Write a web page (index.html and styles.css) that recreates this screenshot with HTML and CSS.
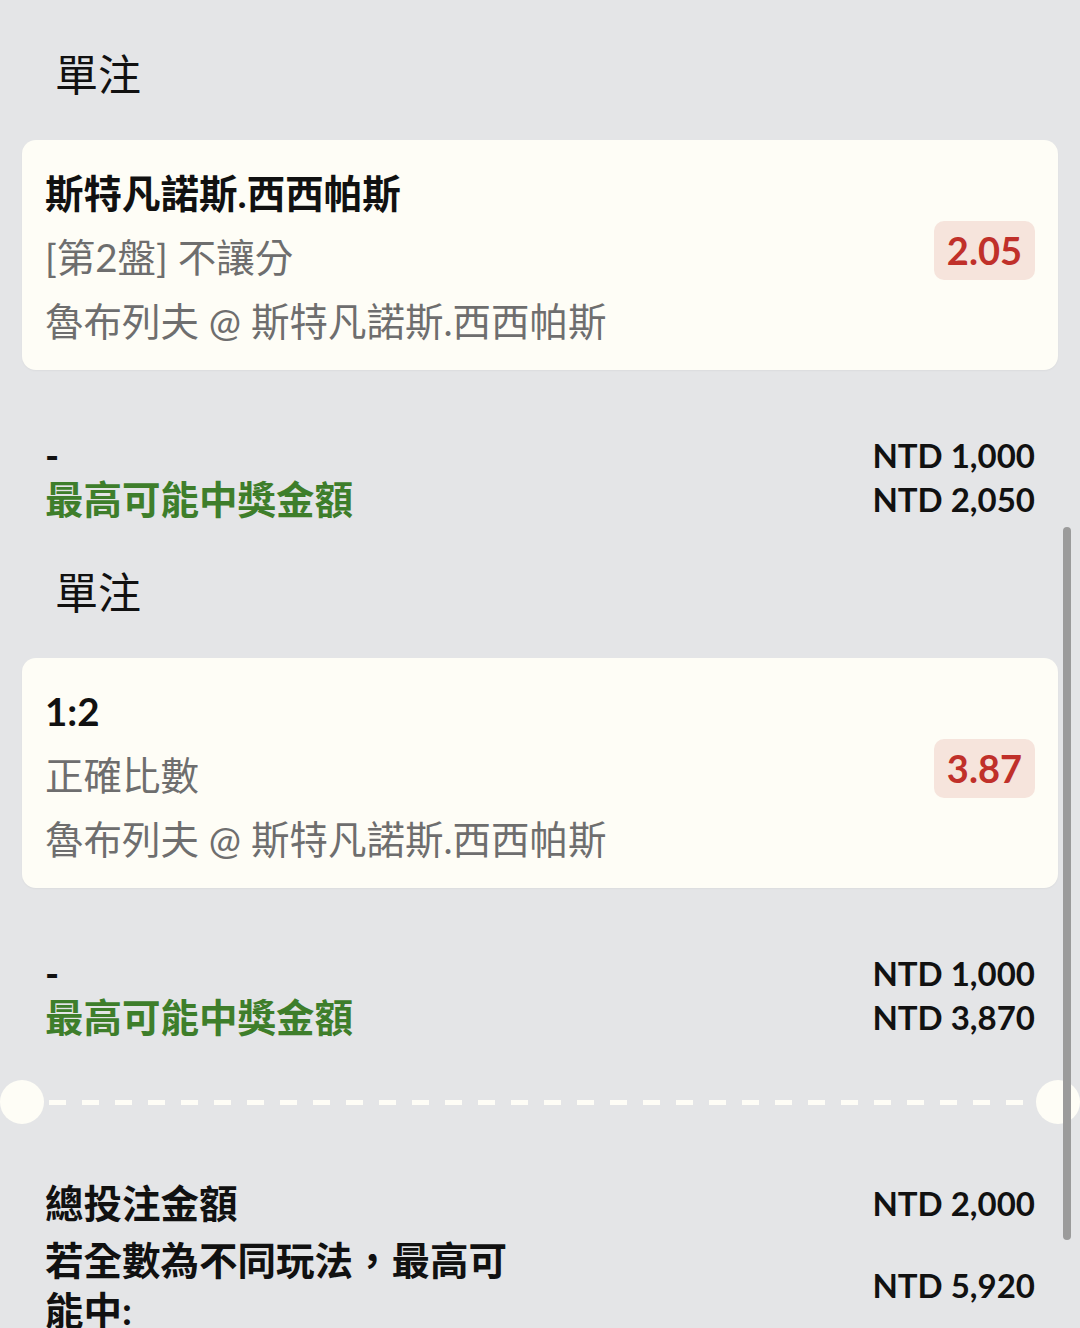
FILE: index.html
```html
<!DOCTYPE html>
<html lang="zh-Hant">
<head>
    <meta charset="UTF-8">
    <title>投注單</title>
    <link rel="stylesheet" href="styles.css">
</head>
<body>
    <div class="pagina">
        <div class="apuesta">
            <h2 class="tipo">單注</h2>
            <div class="tarjeta">
                <div class="info">
                    <div class="titulo">斯特凡諾斯.西西帕斯</div>
                    <div class="linea">[第2盤] 不讓分</div>
                    <div class="linea">魯布列夫 @ 斯特凡諾斯.西西帕斯</div>
                </div>
                <div class="cuota">2.05</div>
            </div>
            <div class="resumen">
                <div class="fila">
                    <span class="guion">-</span>
                    <span class="monto">NTD 1,000</span>
                </div>
                <div class="fila">
                    <span class="ganancia">最高可能中獎金額</span>
                    <span class="monto">NTD 2,050</span>
                </div>
            </div>
        </div>

        <div class="apuesta">
            <h2 class="tipo">單注</h2>
            <div class="tarjeta">
                <div class="info">
                    <div class="titulo">1:2</div>
                    <div class="linea">正確比數</div>
                    <div class="linea">魯布列夫 @ 斯特凡諾斯.西西帕斯</div>
                </div>
                <div class="cuota">3.87</div>
            </div>
            <div class="resumen">
                <div class="fila">
                    <span class="guion">-</span>
                    <span class="monto">NTD 1,000</span>
                </div>
                <div class="fila">
                    <span class="ganancia">最高可能中獎金額</span>
                    <span class="monto">NTD 3,870</span>
                </div>
            </div>
        </div>

        <div class="separador">
            <span class="circulo"></span>
            <span class="puntos"></span>
            <span class="circulo"></span>
        </div>

        <div class="totales">
            <div class="fila-total">
                <span class="etiqueta">總投注金額</span>
                <span class="monto">NTD 2,000</span>
            </div>
            <div class="fila-total segunda">
                <span class="etiqueta">若全數為不同玩法，最高可能中:</span>
                <span class="monto">NTD 5,920</span>
            </div>
        </div>
    </div>

    <div class="barra"></div>
</body>
</html>
```

FILE: styles.css
```css
html {
    overflow: hidden;
}
body {
    margin: 0;
    background-color: #e4e5e7;
    font-family: Lato, "Noto Sans CJK TC", sans-serif;
    color: #111;
}
.pagina {
    padding: 45px 22px 0;
}
.apuesta + .apuesta {
    margin-top: 42px;
}
.tipo {
    margin: 0 0 35px 33px;
    font-size: 43px;
    font-weight: normal;
    line-height: 60px;
}
.tarjeta {
    display: flex;
    align-items: center;
    justify-content: space-between;
    background: #fefdf6;
    border-radius: 14px;
    padding: 21px 23px 17px 23px;
    box-shadow: 0 1px 2px rgba(0, 0, 0, 0.04);
}
.titulo {
    font-size: 38.5px;
    font-weight: bold;
    line-height: 64px;
}
.linea {
    font-size: 38.5px;
    line-height: 64px;
    color: #6e6e6e;
}
.cuota {
    margin-bottom: 14px;
    background-color: #f6e4dc;
    color: #c0302a;
    font-size: 38px;
    font-weight: bold;
    line-height: 43px;
    padding: 8px 13px;
    border-radius: 10px;
}
.resumen {
    margin-top: 63px;
    padding: 0 23px;
}
.fila {
    display: flex;
    justify-content: space-between;
    align-items: center;
    line-height: 44px;
}
.guion {
    font-size: 38px;
    font-weight: bold;
}
.ganancia {
    font-size: 38.5px;
    font-weight: bold;
    color: #3e7e2b;
}
.monto {
    font-size: 33px;
    font-weight: bold;
}
.separador {
    display: flex;
    align-items: center;
    margin: 41px -22px 0;
}
.circulo {
    width: 44px;
    height: 44px;
    border-radius: 50%;
    background: #fefdf6;
    flex-shrink: 0;
}
.puntos {
    flex: 1;
    height: 5px;
    margin: 0 5px;
    background: repeating-linear-gradient(to right, #fefdf6 0, #fefdf6 17px, transparent 17px, transparent 33px);
}
.totales {
    margin-top: 53px;
    padding: 0 23px;
}
.fila-total {
    display: flex;
    justify-content: space-between;
    align-items: center;
    line-height: 52px;
}
.fila-total.segunda {
    margin-top: 6px;
    line-height: 50px;
}
.etiqueta {
    max-width: 490px;
    font-size: 38.5px;
    font-weight: bold;
}
.barra {
    position: fixed;
    top: 527px;
    right: 9px;
    width: 8px;
    height: 713px;
    border-radius: 4px;
    background: #9b9b9b;
}
```
